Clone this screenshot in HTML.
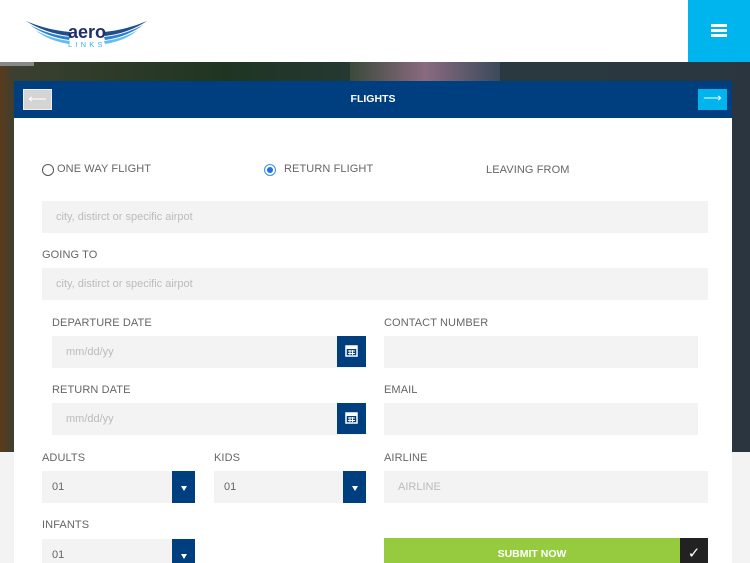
<!DOCTYPE html><html><head><style>
*{margin:0;padding:0;box-sizing:border-box}
html,body{width:750px;height:563px;overflow:hidden}
body{position:relative;background:#f3f3f3;font-family:"Liberation Sans",sans-serif}
.abs{position:absolute}
.lbl{position:absolute;font-size:11px;color:#666;letter-spacing:.1px}
.in{position:absolute;background:#f3f3f3;height:32px;font-size:11px;color:#bbb;padding-left:14px;line-height:32px}
.btn{position:absolute;background:#003f7f;width:23px;height:32px;top:0;right:0}
.tri{position:absolute;left:9px;top:15px;border-left:3px solid transparent;border-right:3px solid transparent;border-top:5px solid #fff}
</style></head><body>
<div class="abs" style="left:0;top:0;width:750px;height:62px;background:#fff"></div>
<div class="abs" style="left:688px;top:0;width:62px;height:62px;background:#00b4ed"></div>
<div class="abs" style="left:711px;top:24px;width:16px;height:3px;background:#fff"></div>
<div class="abs" style="left:711px;top:29px;width:16px;height:3px;background:#fff"></div>
<div class="abs" style="left:711px;top:34px;width:16px;height:3px;background:#fff"></div>
<svg class="abs" style="left:25px;top:18px" width="125" height="30">
<path d="M1 3 Q22 12 45 14 L44 18 Q20 15 1 3Z" fill="#1f4e8c"/>
<path d="M5 7 Q24 17 45 19 L44 22 Q22 19 5 7Z" fill="#2f7fcf"/>
<path d="M10 12 Q26 21 45 23 L44 26 Q24 23 10 12Z" fill="#5ec0f0"/>
<path d="M122 3 Q101 12 79 14 L80 18 Q104 15 122 3Z" fill="#1f4e8c"/>
<path d="M118 7 Q99 17 79 19 L80 22 Q102 19 118 7Z" fill="#2f7fcf"/>
<path d="M113 12 Q97 21 79 23 L80 26 Q100 23 113 12Z" fill="#5ec0f0"/>
<text x="43" y="20" font-family="Liberation Sans" font-weight="bold" font-size="18" fill="#1f2f6b">aero</text>
<text x="43" y="29" font-family="Liberation Sans" font-size="7.5" letter-spacing="3.2" fill="#3ab0ea">LINKS</text>
</svg>
<div class="abs" style="left:0;top:62px;width:750px;height:390px;background:linear-gradient(90deg,#5a3a1c 0,#3b4030 2%,#1f3522 30%,#2a3a40 60%,#2a3540 100%)"></div>
<div class="abs" style="left:350px;top:62px;width:150px;height:19px;background:linear-gradient(90deg,#3a4a3a,#8a6a80,#3a4a5a)"></div>
<div class="abs" style="left:0;top:62px;width:34px;height:4px;background:#888"></div>
<div class="abs" style="left:14px;top:81px;width:718px;height:482px;background:#fff"></div>
<div class="abs" style="left:14px;top:81px;width:718px;height:37px;background:#003f7f"></div>
<div class="abs" style="left:14px;top:81px;width:718px;height:37px;color:#fff;font-size:10.5px;font-weight:bold;text-align:center;line-height:37px">FLIGHTS</div>
<div class="abs" style="left:23px;top:89px;width:29px;height:21px;background:#d4d4d4;border:1px solid #eee;color:#fff;text-align:center;line-height:18px;font-size:13px">⟵</div>
<div class="abs" style="left:698px;top:89px;width:29px;height:21px;background:#00b4ed;color:#fff;text-align:center;line-height:18px;font-size:13px">⟶</div>
<div class="abs" style="left:42px;top:164px;width:12px;height:12px;border:1px solid #555;border-radius:50%"></div>
<div class="lbl" style="left:57px;top:163px">ONE WAY FLIGHT</div>
<div class="abs" style="left:264px;top:164px;width:12px;height:12px;border:1px solid #3a8ef0;border-radius:50%"></div>
<div class="abs" style="left:267px;top:167px;width:6px;height:6px;background:#1a73e8;border-radius:50%"></div>
<div class="lbl" style="left:284px;top:163px">RETURN FLIGHT</div>
<div class="lbl" style="left:486px;top:164px">LEAVING FROM</div>
<div class="in" style="left:42px;top:201px;width:666px">city, distirct or specific airpot</div>
<div class="lbl" style="left:42px;top:249px">GOING TO</div>
<div class="in" style="left:42px;top:268px;width:666px">city, distirct or specific airpot</div>
<div class="lbl" style="left:52px;top:317px">DEPARTURE DATE</div>
<div class="in" style="left:52px;top:336px;width:314px">mm/dd/yy<div class="btn" style="width:29px;height:31px"><svg width="29" height="31"><rect x="9" y="10" width="11" height="10" fill="none" stroke="#fff" stroke-width="1.5"/><rect x="9" y="10" width="11" height="3" fill="#fff"/><path d="M11 15h7M11 17.5h7M13 14v5M15.5 14v5" stroke="#fff"/></svg></div></div>
<div class="lbl" style="left:384px;top:317px">CONTACT NUMBER</div>
<div class="in" style="left:384px;top:336px;width:314px"></div>
<div class="lbl" style="left:52px;top:384px">RETURN DATE</div>
<div class="in" style="left:52px;top:403px;width:314px">mm/dd/yy<div class="btn" style="width:29px;height:31px"><svg width="29" height="31"><rect x="9" y="10" width="11" height="10" fill="none" stroke="#fff" stroke-width="1.5"/><rect x="9" y="10" width="11" height="3" fill="#fff"/><path d="M11 15h7M11 17.5h7M13 14v5M15.5 14v5" stroke="#fff"/></svg></div></div>
<div class="lbl" style="left:384px;top:384px">EMAIL</div>
<div class="in" style="left:384px;top:403px;width:314px"></div>
<div class="lbl" style="left:42px;top:452px">ADULTS</div>
<div class="in" style="left:42px;top:471px;width:153px;color:#666;padding-left:10px">01<div class="btn"><div class="tri"></div></div></div>
<div class="lbl" style="left:214px;top:452px">KIDS</div>
<div class="in" style="left:214px;top:471px;width:152px;color:#666;padding-left:10px">01<div class="btn"><div class="tri"></div></div></div>
<div class="lbl" style="left:384px;top:452px">AIRLINE</div>
<div class="in" style="left:384px;top:471px;width:324px">AIRLINE</div>
<div class="lbl" style="left:42px;top:519px">INFANTS</div>
<div class="in" style="left:42px;top:539px;width:153px;color:#666;padding-left:10px">01<div class="btn"><div class="tri"></div></div></div>
<div class="abs" style="left:384px;top:538px;width:296px;height:32px;background:#96cb40;color:#fff;font-size:10.5px;font-weight:bold;text-align:center;line-height:32px">SUBMIT NOW</div>
<div class="abs" style="left:680px;top:538px;width:28px;height:32px;background:#222;color:#fff;font-size:15px;text-align:center;line-height:32px">✓</div>
</body></html>
